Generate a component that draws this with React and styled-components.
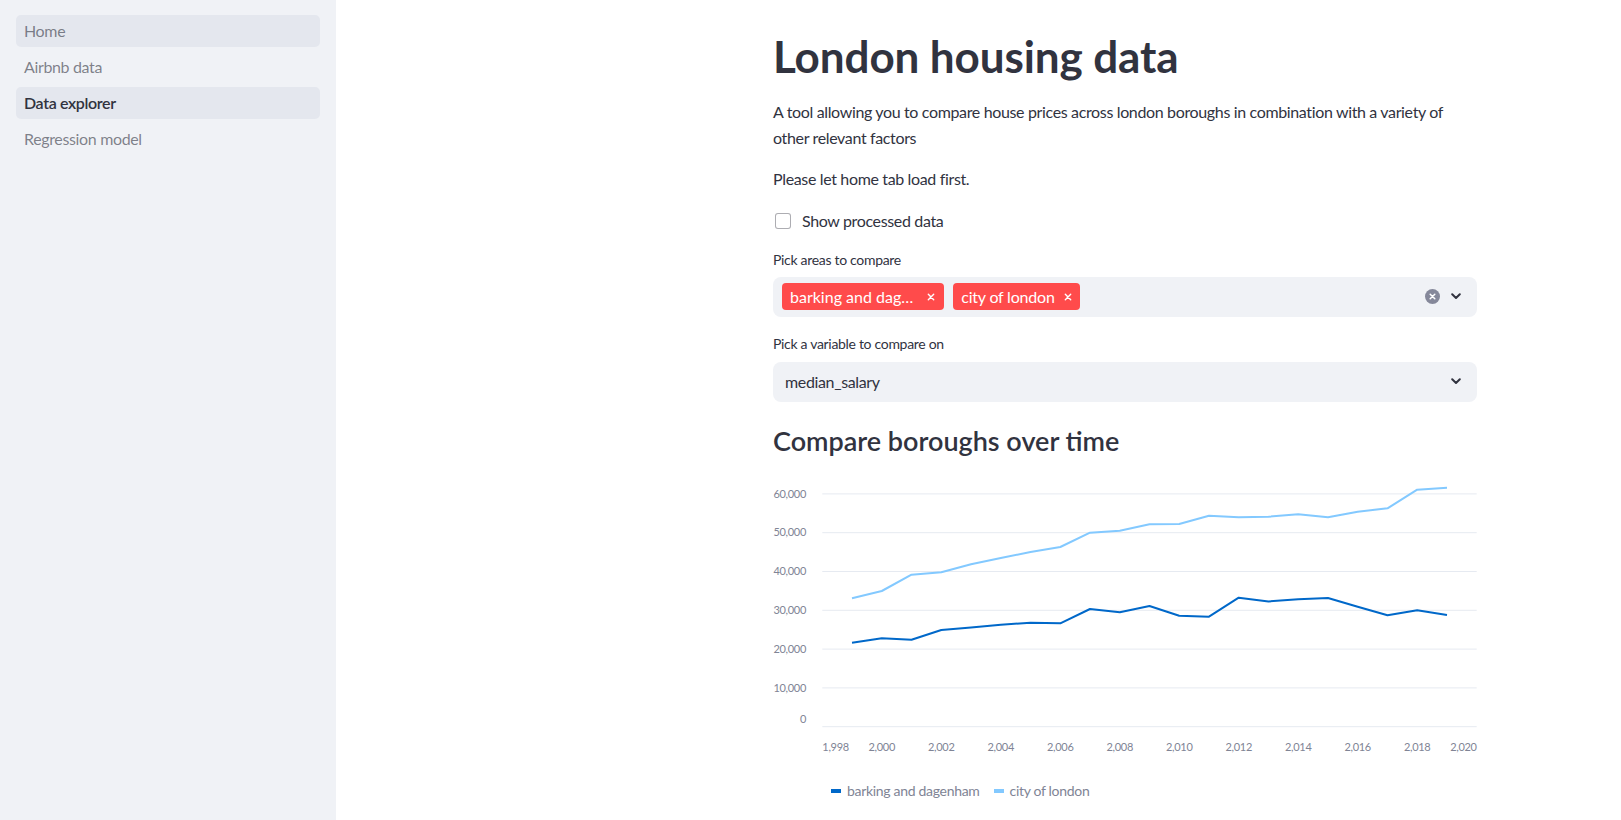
import React from 'react';
import styled, { createGlobalStyle } from 'styled-components';

const FONT = `Lato, "Source Sans Pro", "Noto Sans", sans-serif`;

const Global = createGlobalStyle`
  html, body { margin: 0; padding: 0; background: #ffffff; }
  body { font-family: ${FONT}; color: #31333f; -webkit-font-smoothing: antialiased; }
  * { box-sizing: border-box; letter-spacing: -0.022em; }
`;

const Page = styled.div`
  display: flex;
  min-height: 100vh;
  width: 100%;
`;

const Sidebar = styled.aside`
  width: 336px;
  flex: none;
  background: #f0f2f6;
  padding: 15px 16px;
  display: flex;
  flex-direction: column;
  gap: 4px;
`;

const NavItem = styled.div`
  height: 32px;
  padding: 0 8px;
  border-radius: 5px;
  display: flex;
  align-items: center;
  font-size: 16px;
  line-height: 32px;
  background: ${(p) => (p.$highlight ? '#e4e7ee' : 'transparent')};
  color: ${(p) => (p.$active ? '#31333f' : 'rgba(49, 51, 63, 0.6)')};
  font-weight: ${(p) => (p.$active ? 600 : 400)};
`;

const Main = styled.main`
  flex: 1;
  padding: 30px 0 0 437px;
`;

const Block = styled.div`
  width: 704px;
  display: flex;
  flex-direction: column;
`;

const Title = styled.h1`
  margin: 0;
  font-size: 44px;
  line-height: 52px;
  font-weight: 700;
  color: #31333f;
  letter-spacing: -0.1px;
`;

const Para = styled.p`
  margin: ${(p) => p.$mt}px 0 0;
  font-size: 16px;
  line-height: 25.6px;
`;

const CheckRow = styled.label`
  margin-top: 17px;
  height: 24px;
  display: flex;
  align-items: center;
  font-size: 16px;
  line-height: 24px;
`;

const CheckBox = styled.span`
  width: 16px;
  height: 16px;
  margin-left: 2px;
  margin-right: 11px;
  border: 1px solid rgba(49, 51, 63, 0.4);
  border-radius: 3px;
  background: #fff;
`;

const FieldLabel = styled.div`
  margin-top: 17px;
  font-size: 14px;
  line-height: 20px;
`;

const Control = styled.div`
  margin-top: ${(p) => p.$mt}px;
  height: 40px;
  background: #f0f2f6;
  border-radius: 8px;
  display: flex;
  align-items: center;
  padding: ${(p) => (p.$multi ? '0 16px 0 9px' : '0 16px 0 12px')};
`;

const Tags = styled.div`
  flex: 1;
  display: flex;
  align-items: center;
  gap: 9px;
`;

const Tag = styled.span`
  height: 27px;
  padding: 0 ${(p) => p.$pr}px 0 8px;
  background: #ff4b4b;
  color: #ffffff;
  border-radius: 4px;
  display: inline-flex;
  align-items: center;
  gap: ${(p) => p.$gap}px;
  font-size: 16px;
  letter-spacing: ${(p) => p.$ls}px;
  white-space: nowrap;
`;

const Value = styled.div`
  flex: 1;
  font-size: 16px;
  line-height: 24px;
`;

const Icons = styled.div`
  display: flex;
  align-items: center;
  gap: 11px;
`;

const SubTitle = styled.h3`
  margin: 21px 0 0;
  font-size: 27px;
  line-height: 36px;
  font-weight: 600;
  color: #31333f;
  letter-spacing: 0;
`;

const ChartSvg = styled.svg`
  display: block;
  margin-top: 1px;
  font-family: ${FONT};
  overflow: visible;
  text {
    letter-spacing: -0.3px;
  }
`;

const Legend = styled.div`
  margin: 21px 0 0 58px;
  display: flex;
  align-items: center;
  gap: 14px;
  height: 20px;
  font-size: 14px;
  color: #808495;
`;

const LegendItem = styled.span`
  display: inline-flex;
  align-items: center;
  gap: 6px;
`;

const Swatch = styled.span`
  width: 10px;
  height: 4px;
  background: ${(p) => p.$color};
`;

const XIcon = ({ size = 8, color = '#fff', w = 1.4 }) => (
  <svg width={size} height={size} viewBox="0 0 8 8">
    <path d="M1.3 1.3 L6.7 6.7 M6.7 1.3 L1.3 6.7" stroke={color} strokeWidth={w} strokeLinecap="round" />
  </svg>
);

const Chevron = () => (
  <svg width="10" height="7" viewBox="0 0 10 7">
    <polyline points="1.2,1.2 5,5 8.8,1.2" fill="none" stroke="#31333f" strokeWidth="2" strokeLinecap="round" strokeLinejoin="round" />
  </svg>
);

const ClearIcon = () => (
  <svg width="15" height="15" viewBox="0 0 15 15">
    <circle cx="7.5" cy="7.5" r="7.5" fill="#85889a" />
    <path d="M5.2 5.2 L9.8 9.8 M9.8 5.2 L5.2 9.8" stroke="#fff" strokeWidth="1.5" strokeLinecap="round" />
  </svg>
);

const years = Array.from({ length: 21 }, (_, i) => 1999 + i);
const bd = [21650, 22780, 22420, 24920, 25600, 26290, 26800, 26650, 30330, 29480, 31100, 28600, 28350, 33250, 32300, 32830, 33170, 30930, 28700, 30000, 28790];
const col = [33090, 34970, 39180, 39800, 41860, 43480, 45030, 46320, 50000, 50510, 52160, 52240, 54380, 53970, 54120, 54740, 53970, 55420, 56290, 61080, 61600];

const X0 = 49.3;
const X1 = 703.7;
const PX = (X1 - X0) / 22;
const Y0 = 266.7;
const PY = 0.00388;
const xs = (yr) => X0 + (yr - 1998) * PX;
const ys = (v) => Y0 - v * PY;
const pts = (arr) => arr.map((v, i) => `${xs(years[i]).toFixed(1)},${ys(v).toFixed(1)}`).join(' ');

const Chart = () => {
  const yTicks = [0, 10000, 20000, 30000, 40000, 50000, 60000];
  const xTicks = [1998, 2000, 2002, 2004, 2006, 2008, 2010, 2012, 2014, 2016, 2018, 2020];
  return (
    <ChartSvg width="704" height="300" viewBox="0 0 704 300">
      {yTicks.map((t) => (
        <g key={t}>
          <line x1={X0} x2={X1} y1={ys(t)} y2={ys(t)} stroke="#e6eaf1" strokeWidth="1" />
          <text
            x="33"
            y={t === 0 ? ys(t) - 6 : ys(t) + 1}
            textAnchor="end"
            dominantBaseline="middle"
            fontSize="11"
            fill="#808495"
          >
            {t.toLocaleString('en-US')}
          </text>
        </g>
      ))}
      {xTicks.map((t, i) => (
        <text
          key={t}
          x={xs(t)}
          y="288"
          textAnchor={i === 0 ? 'start' : i === xTicks.length - 1 ? 'end' : 'middle'}
          dominantBaseline="middle"
          fontSize="11"
          fill="#808495"
        >
          {t.toLocaleString('en-US')}
        </text>
      ))}
      <polyline points={pts(col)} fill="none" stroke="#83c9ff" strokeWidth="2" strokeLinejoin="round" />
      <polyline points={pts(bd)} fill="none" stroke="#0068c9" strokeWidth="2" strokeLinejoin="round" />
    </ChartSvg>
  );
};

export default function App() {
  return (
    <Page>
      <Global />
      <Sidebar>
        <NavItem $highlight>Home</NavItem>
        <NavItem>Airbnb data</NavItem>
        <NavItem $highlight $active>Data explorer</NavItem>
        <NavItem>Regression model</NavItem>
      </Sidebar>
      <Main>
        <Block>
          <Title>London housing data</Title>
          <Para $mt={17}>
            A tool allowing you to compare house prices across london boroughs in combination with a variety of other relevant factors
          </Para>
          <Para $mt={16}>Please let home tab load first.</Para>
          <CheckRow>
            <CheckBox />
            Show processed data
          </CheckRow>
          <FieldLabel>Pick areas to compare</FieldLabel>
          <Control $mt={7} $multi>
            <Tags>
              <Tag $gap={14} $pr={9} $ls={0}>
                barking and dag…
                <XIcon />
              </Tag>
              <Tag $gap={9} $pr={8} $ls={-0.2}>
                city of london
                <XIcon />
              </Tag>
            </Tags>
            <Icons>
              <ClearIcon />
              <Chevron />
            </Icons>
          </Control>
          <FieldLabel>Pick a variable to compare on</FieldLabel>
          <Control $mt={8}>
            <Value>median_salary</Value>
            <Icons>
              <Chevron />
            </Icons>
          </Control>
          <SubTitle>Compare boroughs over time</SubTitle>
          <Chart />
          <Legend>
            <LegendItem>
              <Swatch $color="#0068c9" />
              barking and dagenham
            </LegendItem>
            <LegendItem>
              <Swatch $color="#83c9ff" />
              city of london
            </LegendItem>
          </Legend>
        </Block>
      </Main>
    </Page>
  );
}
